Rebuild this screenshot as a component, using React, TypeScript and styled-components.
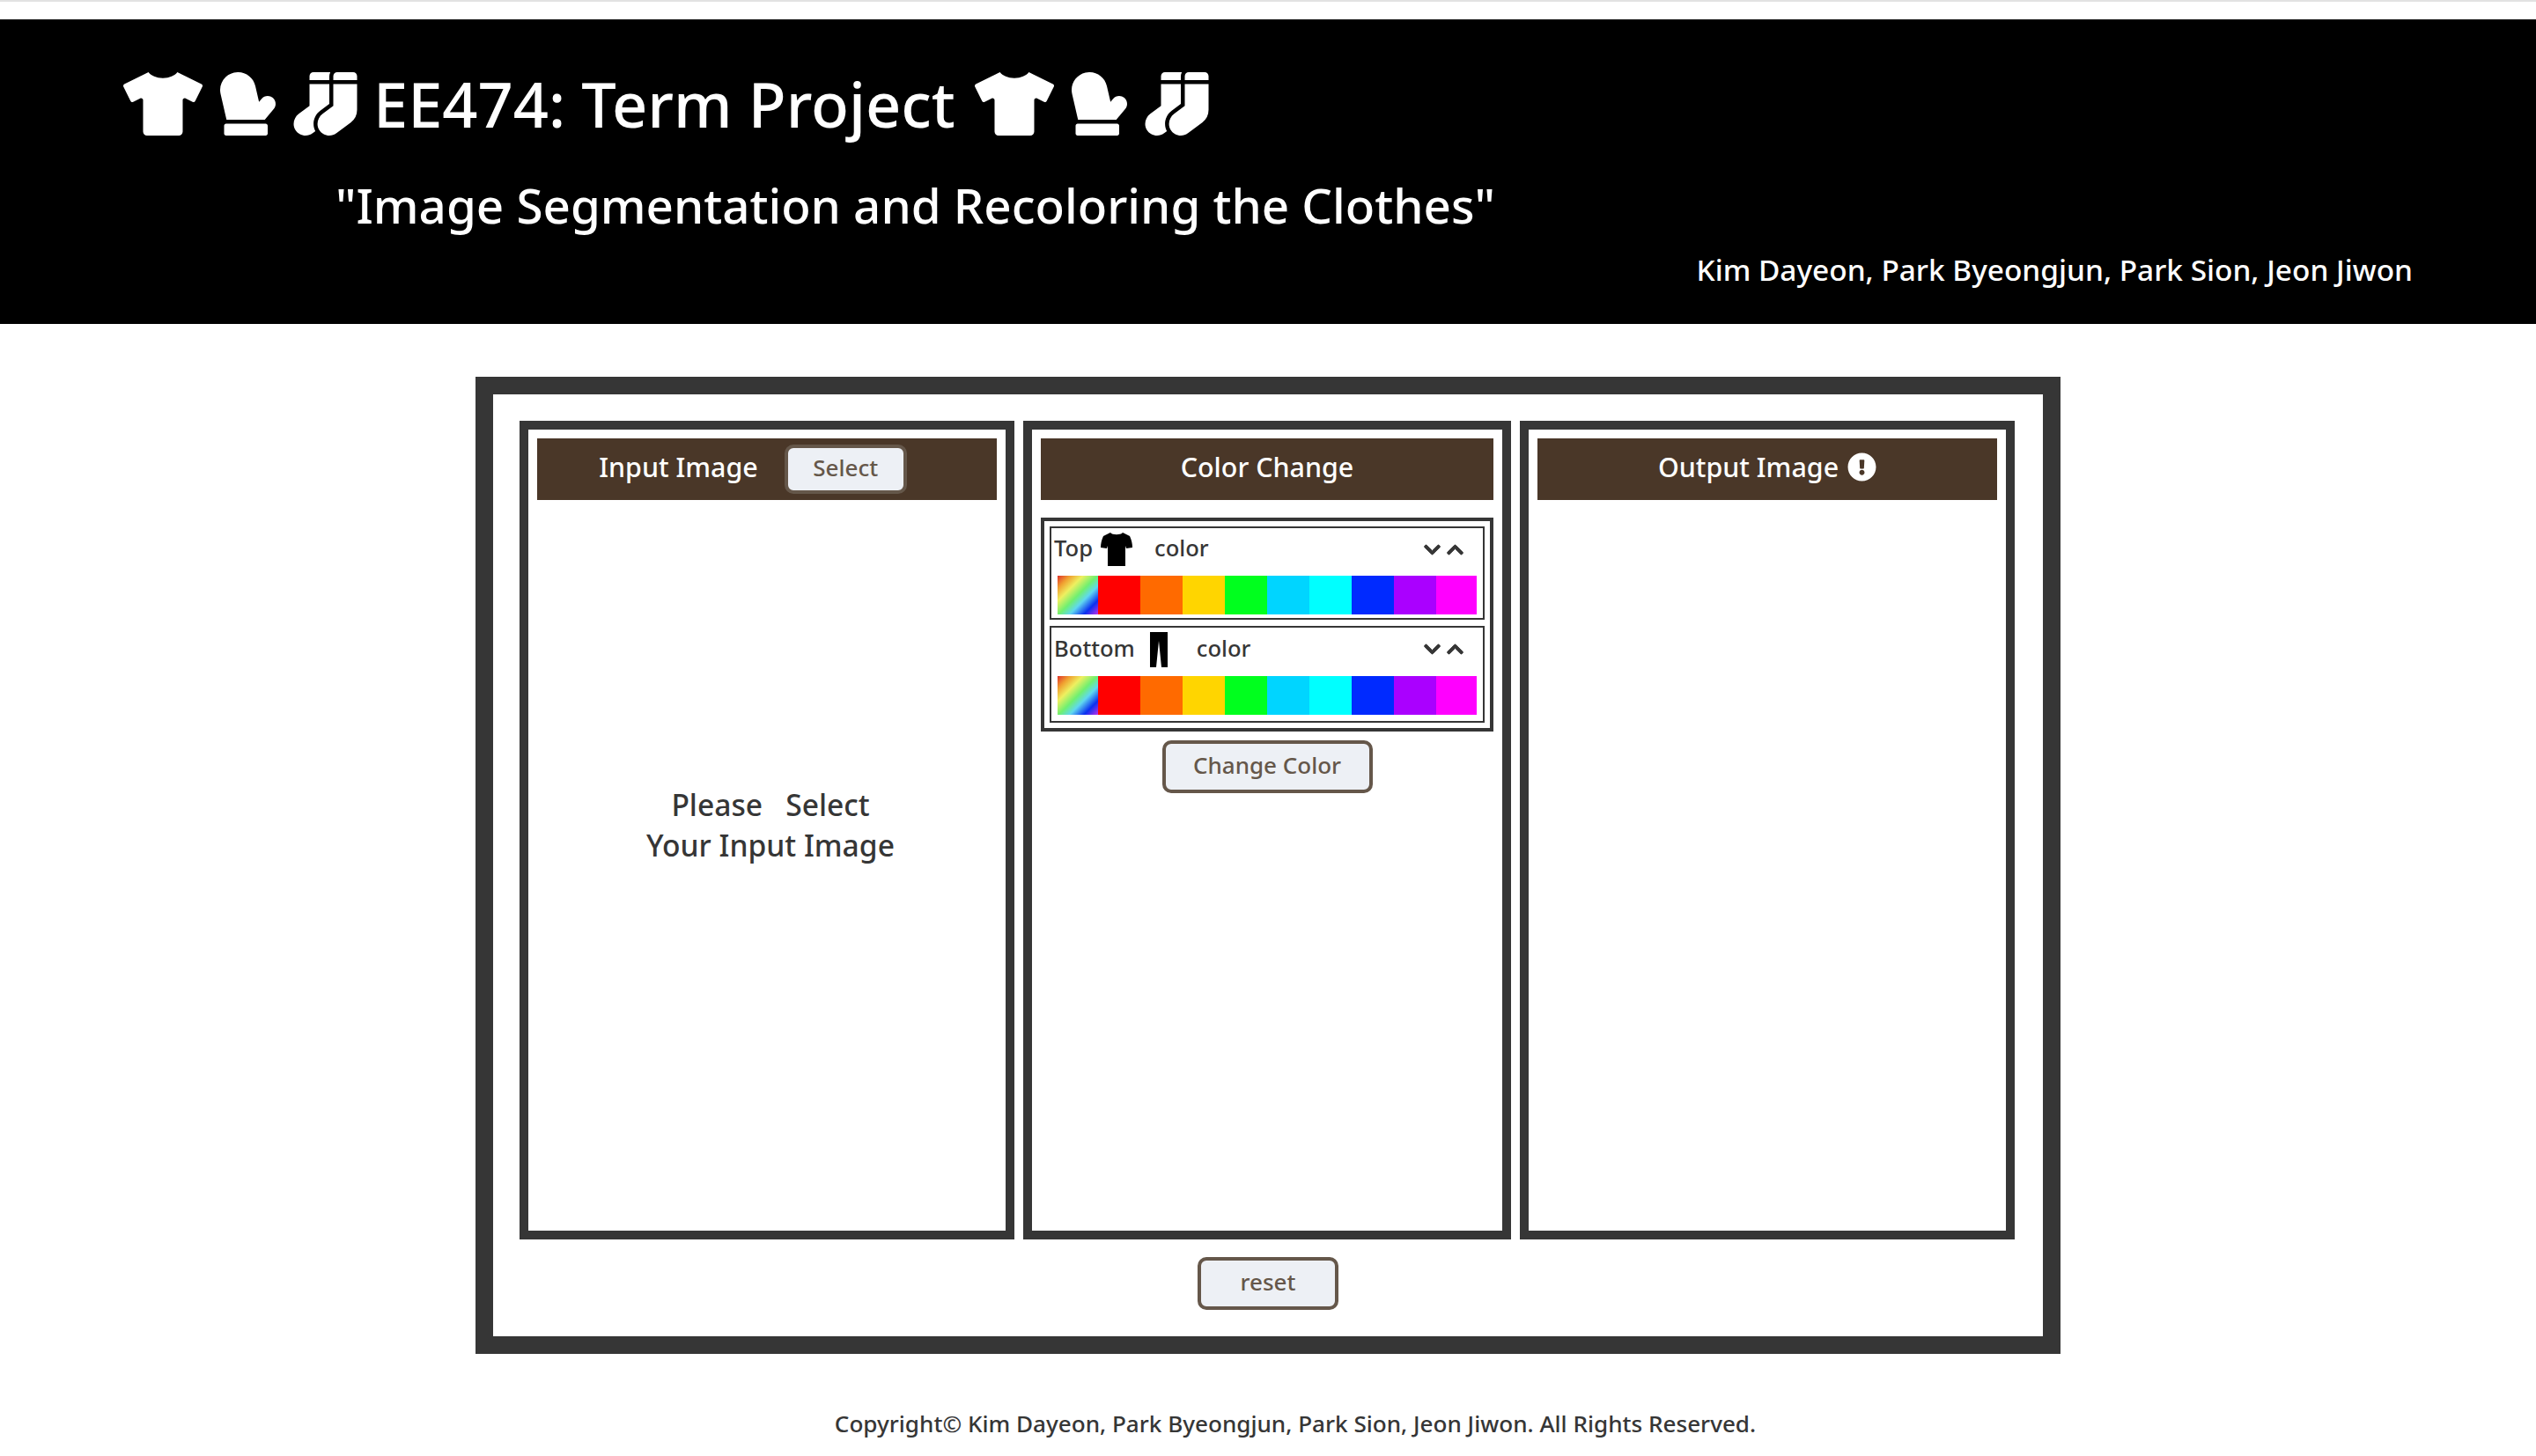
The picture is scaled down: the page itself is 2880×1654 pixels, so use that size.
import React from "react";
import styled, { createGlobalStyle } from "styled-components";
import { FaTshirt, FaMitten, FaSocks, FaExclamationCircle, FaChevronDown, FaChevronUp } from "react-icons/fa";

const Global = createGlobalStyle`
  html, body { margin: 0; padding: 0; background: #fff; }
  body { font-family: "Noto Sans", "Noto Sans CJK KR", sans-serif; font-weight: 500; }
  * { box-sizing: border-box; }
`;

const Page = styled.div`
  width: 2880px;
  height: 1654px;
  overflow: hidden;
  border-top: 2px solid #e2e2e2;
  padding-top: 20px;
`;

const Banner = styled.header`
  height: 346px;
  background: #000;
  color: #fff;
  padding: 60px 140px 0;
`;

const TitleRow = styled.h1`
  display: flex;
  align-items: center;
  height: 72px;
  margin: 0;
  font-size: 70.3px;
  font-weight: 500;
  line-height: 72px;
`;

const TitleIcons = styled.span<{ $m: string }>`
  display: inline-flex;
  align-items: center;
  gap: 20px;
  margin: ${(p) => p.$m};
`;

const ShirtGlyph = styled(FaTshirt)`
  display: block;
  width: 90px;
  height: 72px;
`;

const MittenGlyph = styled(FaMitten)`
  display: block;
  width: 63px;
  height: 72px;
`;

const SocksGlyph = styled(FaSocks)`
  display: block;
  width: 73px;
  height: 72px;
`;

const Subtitle = styled.h2`
  margin: 41px 0 0 241px;
  font-size: 54.7px;
  font-weight: 500;
  line-height: 76px;
`;

const Authors = styled.p`
  margin: 12px 0 0;
  text-align: right;
  font-size: 33.4px;
  line-height: 46px;
`;

const Frame = styled.main`
  width: 1800px;
  height: 1110px;
  margin: 60px auto 0;
  border: 20px solid #363636;
  padding: 30px 0 0 30px;
`;

const Columns = styled.div`
  display: grid;
  grid-template-columns: 562px 554px 562px;
  gap: 10px;
  height: 930px;
`;

const Panel = styled.section`
  border: 10px solid #363636;
  padding: 10px;
`;

const PanelHead = styled.div<{ $shift?: number }>`
  height: 70px;
  background: #4a3728;
  color: #fff;
  font-size: 30.4px;
  display: flex;
  align-items: center;
  justify-content: center;
  gap: 30px;
  padding-right: ${(p) => p.$shift ?? 0}px;
`;

const HeadLabel = styled.span`
  display: inline-flex;
  align-items: center;
  gap: 10px;
  margin-bottom: 5px;
  svg { display: block; width: 33px; height: 33px; }
`;

const Btn = styled.button<{ $w: number; $h: number }>`
  width: ${(p) => p.$w}px;
  height: ${(p) => p.$h}px;
  background: #edf0f5;
  border: 4px solid #65574a;
  border-radius: 10px;
  color: #65574a;
  font-family: inherit;
  font-weight: 500;
  font-size: 26px;
  padding: 0 0 4px;
  display: block;
`;

const Placeholder = styled.div`
  margin-top: 323px;
  padding-left: 8px;
  text-align: center;
  color: #363636;
  font-size: 33.6px;
  line-height: 46px;
  white-space: pre;
`;

const ColorBox = styled.div`
  margin-top: 20px;
  border: 4px solid #363636;
  height: 243px;
  padding: 6px;
  display: flex;
  flex-direction: column;
  gap: 7px;
`;

const ColorRow = styled.div<{ $h: number }>`
  height: ${(p) => p.$h}px;
  border: 2px solid #363636;
  padding: 0 7px;
`;

const RowHead = styled.div<{ $h: number }>`
  height: ${(p) => p.$h}px;
  padding-bottom: 6px;
  margin-left: -4px;
  display: flex;
  align-items: center;
  color: #363636;
  font-size: 25.6px;
`;

const RowLabel = styled.span`
  margin-bottom: 3px;
`;

const GarmentIcon = styled.span`
  width: 48px;
  margin-left: 3px;
  display: flex;
  justify-content: center;
  svg { display: block; }
`;

const ColorLabel = styled.span`
  margin: 0 0 3px 19px;
`;

const Arrows = styled.span`
  margin-left: auto;
  margin-right: 14px;
  display: flex;
  align-items: center;
  gap: 5px;
  svg {
    display: block;
    width: 21px;
    height: 21px;
    stroke: currentColor;
    stroke-width: 24px;
  }
`;

const Swatches = styled.div`
  display: grid;
  grid-template-columns: 46px repeat(8, 48px) 46px;
  height: 44px;
`;

const Swatch = styled.span<{ $c: string }>`
  background: ${(p) => p.$c};
`;

const ChangeWrap = styled.div`
  margin-top: 10px;
  display: flex;
  justify-content: center;
`;

const ResetWrap = styled.div`
  margin: 20px 0 0 -30px;
  display: flex;
  justify-content: center;
`;

const Footer = styled.footer`
  margin-top: 61px;
  padding-left: 62px;
  text-align: center;
  color: #363636;
  font-size: 26.1px;
  line-height: 36px;
`;

const rainbow =
  "linear-gradient(135deg,#e0302a 0%,#f0a030 16%,#eef060 32%,#70f070 50%,#60d8f0 64%,#0a30f0 82%,#c030e8 100%)";
const colors = [rainbow, "#ff0000", "#ff6a00", "#ffd500", "#00ff1e", "#00d5ff", "#00ffff", "#002aff", "#aa00ff", "#ff00ff"];

const SmallShirt = () => (
  <svg width="36" height="38" viewBox="0 0 36 38">
    <path d="M11 0 C13 3 23 3 25 0 L33 4 C35 8 36 13 36 17 L29 18 L28 15 L28 38 L8 38 L8 15 L7 18 L0 17 C0 13 1 8 3 4 Z" fill="#000" />
  </svg>
);

const Pants = () => (
  <svg width="20" height="40" viewBox="0 0 20 40">
    <path d="M0 0 H20 V40 H13 L10 10 L7 40 H0 Z" fill="#000" />
  </svg>
);

const Icons = ({ m }: { m: string }) => (
  <TitleIcons $m={m}>
    <ShirtGlyph />
    <MittenGlyph />
    <SocksGlyph />
  </TitleIcons>
);

const Row = ({ label, icon, h, head }: { label: string; icon: React.ReactNode; h: number; head: number }) => (
  <ColorRow $h={h}>
    <RowHead $h={head}>
      <RowLabel>{label}</RowLabel>
      <GarmentIcon>{icon}</GarmentIcon>
      <ColorLabel>color</ColorLabel>
      <Arrows>
        <FaChevronDown />
        <FaChevronUp />
      </Arrows>
    </RowHead>
    <Swatches>
      {colors.map((c, i) => (
        <Swatch key={i} $c={c} />
      ))}
    </Swatches>
  </ColorRow>
);

export default function App() {
  return (
    <>
      <Global />
      <Page>
        <Banner>
          <TitleRow>
            <Icons m="0 18px 0 0" />
            EE474: Term Project
            <Icons m="0 0 0 22px" />
          </TitleRow>
          <Subtitle>"Image Segmentation and Recoloring the Clothes"</Subtitle>
          <Authors>Kim Dayeon, Park Byeongjun, Park Sion, Jeon Jiwon</Authors>
        </Banner>
        <Frame>
          <Columns>
            <Panel>
              <PanelHead $shift={32}>
                <HeadLabel>Input Image</HeadLabel>
                <Btn $w={139} $h={56}>Select</Btn>
              </PanelHead>
              <Placeholder>{"Please   Select\nYour Input Image"}</Placeholder>
            </Panel>
            <Panel>
              <PanelHead>
                <HeadLabel>Color Change</HeadLabel>
              </PanelHead>
              <ColorBox>
                <Row label="Top" icon={<SmallShirt />} h={106} head={54} />
                <Row label="Bottom" icon={<Pants />} h={110} head={55} />
              </ColorBox>
              <ChangeWrap>
                <Btn $w={239} $h={60}>Change Color</Btn>
              </ChangeWrap>
            </Panel>
            <Panel>
              <PanelHead>
                <HeadLabel>
                  Output Image
                  <FaExclamationCircle />
                </HeadLabel>
              </PanelHead>
            </Panel>
          </Columns>
          <ResetWrap>
            <Btn $w={160} $h={60}>reset</Btn>
          </ResetWrap>
        </Frame>
        <Footer>Copyright© Kim Dayeon, Park Byeongjun, Park Sion, Jeon Jiwon. All Rights Reserved.</Footer>
      </Page>
    </>
  );
}
